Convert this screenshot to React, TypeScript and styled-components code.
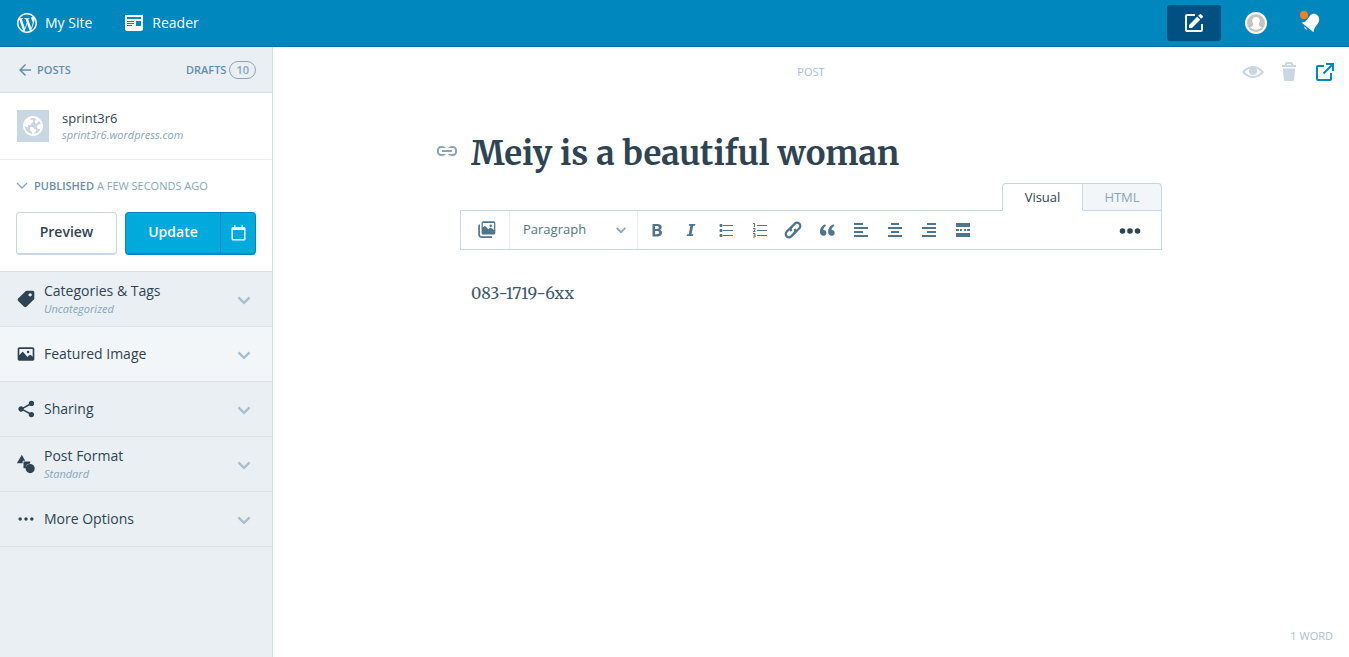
import React from 'react';
import styled, { createGlobalStyle } from 'styled-components';

const sans = `"Open Sans", "Noto Sans", sans-serif`;
const serif = `Merriweather, "DejaVu Serif Condensed", "DejaVu Serif", serif`;

const Global = createGlobalStyle`
  *, *::before, *::after { box-sizing: border-box; }
  body { margin: 0; background: #fff; color: #2e4453; font-family: ${sans}; font-size: 14px; line-height: 20px; }
  button, input, textarea, select { font: inherit; color: inherit; margin: 0; padding: 0; border: 0; background: none; }
  button { cursor: pointer; }
  a { color: inherit; text-decoration: none; }
  svg { display: block; fill: currentColor; flex: none; }
`;

const Page = styled.div`
  min-height: 100vh;
  display: flex;
  flex-direction: column;
`;

const Masterbar = styled.header`
  display: flex;
  align-items: center;
  justify-content: space-between;
  height: 47px;
  padding: 0 12px 0 15px;
  background: #0087be;
  border-bottom: 1px solid #006e9e;
  color: #fff;
`;

const NavGroup = styled.nav`
  display: flex;
  align-items: center;
  gap: 30px;
`;

const NavLink = styled.a`
  display: flex;
  align-items: center;
  gap: 6px;
  font-size: 14px;
`;

const Actions = styled.div`
  display: flex;
  align-items: center;
`;

const ComposeButton = styled.button`
  display: flex;
  align-items: center;
  justify-content: center;
  width: 54px;
  height: 36px;
  margin-right: 8px;
  border-radius: 3px;
  background: #005082;
`;

const BarButton = styled.button`
  display: flex;
  align-items: center;
  justify-content: center;
  width: 54px;
  height: 46px;
`;

const Body = styled.div`
  display: flex;
  flex: 1;
`;

const Sidebar = styled.aside`
  display: flex;
  flex-direction: column;
  flex: none;
  width: 273px;
  background: #e9eff3;
  border-right: 1px solid #d5e1e9;
`;

const SideHeader = styled.div`
  display: flex;
  align-items: center;
  justify-content: space-between;
  height: 46px;
  padding: 0 16px;
  border-bottom: 1px solid #d5e1e9;
  color: #668eaa;
  font-size: 11px;
  font-weight: 600;
  text-transform: uppercase;
`;

const SideLink = styled.a`
  display: flex;
  align-items: center;
  gap: 3px;
`;

const Count = styled.span`
  padding: 0 6px;
  border: 1px solid #87a6bc;
  border-radius: 12px;
  color: #87a6bc;
  line-height: 16px;
`;

const SiteCard = styled.div`
  display: flex;
  align-items: center;
  gap: 13px;
  height: 67px;
  padding: 0 17px;
  background: #fff;
  border-bottom: 1px solid #e9eff3;
`;

const SiteIcon = styled.span`
  display: flex;
  align-items: center;
  justify-content: center;
  width: 32px;
  height: 32px;
  background: #c8d7e1;
  color: #fff;
`;

const SiteName = styled.div`
  font-size: 13px;
  line-height: 18px;
`;

const SiteUrl = styled.div`
  color: #87a6bc;
  font-size: 11px;
  font-style: italic;
  line-height: 16px;
`;

const Publish = styled.section`
  padding: 16px;
  background: #fff;
  border-bottom: 1px solid #d5e1e9;
`;

const Status = styled.button`
  display: flex;
  align-items: center;
  gap: 6px;
  color: #87a6bc;
  font-size: 11px;
  text-transform: uppercase;
  b { color: #668eaa; font-weight: 600; }
`;

const PublishButtons = styled.div`
  display: flex;
  gap: 8px;
  margin-top: 16px;
`;

const Preview = styled.button`
  width: 101px;
  height: 43px;
  padding-bottom: 2px;
  border: 1px solid #c8d7e1;
  border-bottom-width: 2px;
  border-radius: 4px;
  font-weight: 600;
`;

const SplitButton = styled.div`
  display: flex;
  flex: 1;
  height: 43px;
  border: 1px solid #0087be;
  border-bottom-width: 2px;
  border-radius: 4px;
  background: #00aadc;
  color: #fff;
`;

const Update = styled.button`
  flex: 1;
  padding-bottom: 2px;
  font-weight: 600;
`;

const Schedule = styled.button`
  display: flex;
  align-items: center;
  justify-content: center;
  width: 35px;
  border-left: 1px solid #0087be;
`;

const Accordion = styled.button<{ $lit?: boolean }>`
  display: flex;
  align-items: center;
  gap: 8px;
  height: 55px;
  padding: 0 19px 0 16px;
  border-bottom: 1px solid #d9e3ea;
  background: ${p => (p.$lit ? '#f3f6f8' : 'transparent')};
  text-align: left;
`;

const AccordionText = styled.span`
  display: flex;
  flex: 1;
  flex-direction: column;
`;

const AccordionTitle = styled.span`
  line-height: 20px;
`;

const AccordionNote = styled.span`
  color: #87a6bc;
  font-size: 11px;
  font-style: italic;
  line-height: 16px;
`;

const Chevron = styled.span`
  padding-top: 2px;
  color: #a8bece;
`;

const Main = styled.main`
  display: flex;
  flex: 1;
  flex-direction: column;
  min-width: 0;
`;

const GroundControl = styled.div`
  display: grid;
  grid-template-columns: 1fr auto 1fr;
  align-items: center;
  height: 50px;
  padding: 0 12px;
`;

const PostType = styled.span`
  grid-column: 2;
  color: #a8bece;
  font-size: 11px;
`;

const Tools = styled.div`
  display: flex;
  justify-content: flex-end;
  gap: 12px;
`;

const ToolButton = styled.button<{ $active?: boolean }>`
  color: ${p => (p.$active ? '#0087be' : '#c8d7e1')};
`;

const Editor = styled.div`
  flex: 1;
  width: 100%;
  max-width: 750px;
  margin: 0 auto;
  padding: 32px 24px 0;
`;

const TitleRow = styled.div`
  display: flex;
  align-items: center;
  gap: 12px;
  margin-left: -25px;
  color: #87a6bc;
`;

const PermalinkButton = styled.button`
  padding-bottom: 4px;
`;

const TitleInput = styled.input`
  flex: 1;
  min-width: 0;
  height: 48px;
  color: #2e4453;
  font-family: ${serif};
  font-size: 33px;
  font-weight: 700;
  outline: 0;
`;

const Tabs = styled.div`
  display: flex;
  justify-content: flex-end;
  margin-top: 6px;
`;

const Tab = styled.button<{ $active?: boolean }>`
  width: ${p => (p.$active ? '81px' : '79px')};
  height: 28px;
  margin-bottom: -1px;
  border: 1px solid #c8d7e1;
  border-left-width: ${p => (p.$active ? '1px' : '0')};
  border-bottom-color: ${p => (p.$active ? '#fff' : '#c8d7e1')};
  border-radius: ${p => (p.$active ? '4px 0 0 0' : '0 4px 0 0')};
  background: ${p => (p.$active ? '#fff' : '#f3f6f8')};
  color: ${p => (p.$active ? '#2e4453' : '#87a6bc')};
  font-size: 13px;
  z-index: 1;
`;

const Toolbar = styled.div`
  display: flex;
  align-items: stretch;
  height: 40px;
  border: 1px solid #c8d7e1;
  color: #4f748e;
`;

const MediaButton = styled.button`
  display: flex;
  align-items: center;
  justify-content: center;
  width: 49px;
  padding-left: 4px;
  border-right: 1px solid #e9eff3;
`;

const FormatSelect = styled.div`
  display: flex;
  align-items: center;
  width: 128px;
  padding: 0 9px 0 13px;
  border-right: 1px solid #e9eff3;
  select { flex: 1; min-width: 0; padding-bottom: 2px; appearance: none; font-size: 13px; }
  svg { color: #87a6bc; }
`;

const FormatButtons = styled.div`
  display: flex;
  flex: 1;
  padding-left: 2px;
`;

const FormatButton = styled.button`
  display: flex;
  align-items: center;
  justify-content: center;
  width: 34px;
`;

const MoreButton = styled(FormatButton)`
  margin-right: 14px;
  padding-top: 2px;
  color: #2e4453;
`;

const Content = styled.textarea`
  display: block;
  width: 100%;
  height: 160px;
  padding: 28px 11px;
  color: #3d596d;
  font-family: ${serif};
  font-size: 16px;
  line-height: 30px;
  resize: none;
  outline: 0;
`;

const Footer = styled.footer`
  padding: 0 16px 11px;
  color: #a8bece;
  font-size: 11px;
  text-align: right;
`;

/* Icons on a 24-unit grid. */
const paths = {
  wordpress: 'M12 2C6.477 2 2 6.477 2 12s4.477 10 10 10 10-4.477 10-10S17.523 2 12 2zM3.5 12c0-1.232.264-2.402.736-3.459L8.291 19.65C5.456 18.272 3.5 15.365 3.5 12zm8.5 8.5c-.834 0-1.64-.12-2.401-.345l2.551-7.411 2.613 7.158c.017.042.038.08.061.116-.884.31-1.833.482-2.824.482zm1.172-12.486c.512-.027.973-.081.973-.081.458-.054.404-.727-.054-.701 0 0-1.377.108-2.265.108-.835 0-2.239-.108-2.239-.108-.458-.026-.511.674-.053.701 0 0 .434.054.892.081l1.324 3.629-1.86 5.579-3.096-9.208c.512-.027.973-.081.973-.081.458-.054.403-.727-.055-.701 0 0-1.376.108-2.265.108-.159 0-.347-.004-.547-.01C6.418 5.025 9.03 3.5 12 3.5c2.213 0 4.228.846 5.74 2.232-.037-.002-.072-.007-.11-.007-.835 0-1.427.727-1.427 1.509 0 .701.404 1.293.835 1.994.323.566.701 1.293.701 2.344 0 .727-.28 1.572-.647 2.748l-.848 2.833-3.072-9.138zm3.101 11.332l2.596-7.506c.485-1.213.646-2.182.646-3.045 0-.313-.021-.603-.057-.874.664 1.21 1.042 2.599 1.042 4.078 0 3.136-1.7 5.874-4.227 7.347z',
  reader: 'M3 4v14c0 1.1.9 2 2 2h14c1.1 0 2-.9 2-2V4H3zm7 11H5v-1h5v1zm2-2H5v-1h7v1zm0-2H5v-1h7v1zm7 4h-5v-5h5v5zm0-7H5V6h14v2z',
  arrowLeft: 'M20 11H7.83l5.59-5.59L12 4l-8 8 8 8 1.41-1.41L7.83 13H20v-2z',
  globe: 'M12 2C6.477 2 2 6.477 2 12s4.477 10 10 10 10-4.477 10-10S17.523 2 12 2zm0 18l2-2 1-1v-2h-2v-1l-1-1H9v3l2 2v1.93c-3.94-.494-7-3.858-7-7.93l1 1h2v-2h2l3-3V6h-2L9 5v-.41C9.927 4.21 10.94 4 12 4s2.073.212 3 .59V6l-1 1v2l1 1 3.13-3.13c.752.897 1.304 1.964 1.606 3.13H18l-2 2v2l1 1h2l.286.286C18.03 18.06 15.24 20 12 20z',
  chevron: 'M20.500 9.500L12 18 3.500 9.500 5.700 7.300 12 13.600l6.300-6.300z',
  tag: 'M20 2.007h-7.087c-.53 0-1.04.21-1.414.586L2.592 11.5c-.78.78-.78 2.046 0 2.827l7.086 7.086c.78.78 2.046.78 2.827 0l8.906-8.906c.376-.374.587-.883.587-1.413V4.007c0-1.105-.895-2-2-2zM17.007 9c-1.105 0-2-.895-2-2s.895-2 2-2 2 .895 2 2-.895 2-2 2z',
  image: 'M13 9.5c0-.828.672-1.5 1.5-1.5s1.5.672 1.5 1.5-.672 1.5-1.5 1.5-1.5-.672-1.5-1.5zM22 6v12c0 1.105-.895 2-2 2H4c-1.105 0-2-.895-2-2V6c0-1.105.895-2 2-2h16c1.105 0 2 .895 2 2zm-2 0H4v7.444L8 9l5.895 6.55 1.587-1.85c.798-.932 2.24-.932 3.037 0L20 15.426V6z',
  share: 'M18.500 15.500c-.9 0-1.600.3-2.200.8L9.400 12.700c.1-.5.1-.9 0-1.400l6.900-3.600c.6.5 1.300.8 2.200.8a3.200 3.200 0 1 0-3.200-3.200l.1.800-6.900 3.700a3.200 3.200 0 1 0 0 4.400l6.900 3.700-.1.800a3.200 3.200 0 1 0 3.200-3.200z',
  shapes: 'M7 1l4 7H8v3H1zM9 9h8v2.500A6 6 0 0 0 11.500 17H9zM17 12a5.500 5.500 0 1 1 0 11 5.500 5.500 0 0 1 0-11z',
  ellipsis: 'M7 12c0 1.104-.896 2-2 2s-2-.896-2-2 .896-2 2-2 2 .896 2 2zm12-2c-1.104 0-2 .896-2 2s.896 2 2 2 2-.896 2-2-.896-2-2-2zm-7 0c-1.104 0-2 .896-2 2s.896 2 2 2 2-.896 2-2-.896-2-2-2z',
  ellipsisBold: 'M4.500 9.200a2.800 2.800 0 1 1 0 5.600 2.800 2.800 0 0 1 0-5.600zM12 9.200a2.800 2.800 0 1 1 0 5.600 2.800 2.800 0 0 1 0-5.600zM19.500 9.200a2.800 2.800 0 1 1 0 5.600 2.800 2.800 0 0 1 0-5.600z',
  create: 'M19 13v6H5V5h8V3H5a2 2 0 0 0-2 2v14a2 2 0 0 0 2 2h14a2 2 0 0 0 2-2v-6zM7 17v-3l8.200-8.200 3 3L10 17zM16.200 4.800l1.400-1.400a1.200 1.200 0 0 1 1.700 0l1.300 1.300a1.200 1.200 0 0 1 0 1.700l-1.400 1.400z',
  eye: 'M12 6C5.188 6 1 12 1 12s4.188 6 11 6 11-6 11-6-4.188-6-11-6zm0 10c-3.943 0-6.926-2.484-8.379-4 1.040-1.085 2.862-2.657 5.254-3.469A3.960 3.960 0 0 0 8 11a4 4 0 0 0 8 0c0-.934-.329-1.784-.875-2.469 2.393.812 4.215 2.385 5.254 3.469-1.455 1.518-4.437 4-8.379 4z',
  trash: 'M6 8.500h12l-.8 11A1.800 1.800 0 0 1 15.400 21H8.600a1.800 1.800 0 0 1-1.800-1.500zM19 5v2H5V5h3V4a2 2 0 0 1 2-2h4a2 2 0 0 1 2 2v1h3zm-9 0h4V4h-4v1z',
  external: 'M19 13v6a2 2 0 0 1-2 2H5a2 2 0 0 1-2-2V7a2 2 0 0 1 2-2h6v2H5v12h12v-6h2zM13 3v2h4.586l-7.793 7.793 1.414 1.414L19 6.414V11h2V3h-8z',
  permalink: 'M17 13H7v-2h10v2zm1-6h-1c-1.631 0-3.065.792-3.977 2H18c1.103 0 2 .897 2 2v2c0 1.103-.897 2-2 2h-4.977c.913 1.208 2.347 2 3.977 2h1c2.209 0 4-1.791 4-4v-2c0-2.209-1.791-4-4-4zM2 11v2c0 2.209 1.791 4 4 4h1c1.630 0 3.065-.792 3.977-2H6c-1.103 0-2-.897-2-2v-2c0-1.103.897-2 2-2h4.977C10.065 7.792 8.631 7 7 7H6c-2.209 0-4 1.791-4 4z',
  images: 'M16.500 8.500a1.500 1.500 0 1 0 0-3 1.500 1.500 0 0 0 0 3zM22 3.500v12a2 2 0 0 1-2 2H7.500a2 2 0 0 1-2-2v-12a2 2 0 0 1 2-2H20a2 2 0 0 1 2 2zm-1.500 0H7v5.500l2.500-2 4 4 1.500-1.200c.8-.7 1.700-.7 2.500 0l3 2.200zM3.500 5v12.500a2 2 0 0 0 2 2H18v2H5.500a4 4 0 0 1-4-4V7a2 2 0 0 1 2-2z',
  bold: 'M6 4h5.500c2.300 0 4 .3 5.100 1 1.100.7 1.600 1.700 1.600 3.200 0 1-.2 1.800-.7 2.400-.5.6-1.100 1-1.900 1.100v.1c1.100.3 1.800.7 2.300 1.400.5.600.7 1.500.7 2.500 0 1.500-.5 2.700-1.600 3.500-1.100.8-2.600 1.300-4.400 1.300H6V4zm3.500 6.500h2.200c.9 0 1.600-.1 2-.4.400-.3.700-.8.700-1.500 0-.6-.2-1.100-.7-1.400-.500-.3-1.200-.4-2.200-.4h-2zm0 2.700v4.500H12c1 0 1.700-.2 2.100-.6.5-.4.7-.9.7-1.700 0-1.400-1-2.200-2.900-2.200z',
  italic: 'M9.500 4L9 6.400h2.200L9 17.600H6.700l-.5 2.400h8.300l.5-2.400h-2.300l2.300-11.200h2.300l.5-2.400z',
  quote: 'M11.200 15.800a3.800 3.800 0 0 1-3.900 3.900C4.200 19.700 2.500 17.300 2.500 14c0-4.200 2.500-7.600 7-9.700l1.300 2.400c-2.500 1.300-3.700 3-3.700 5.300 2.500-.2 4.100 1.500 4.100 3.800zM22.200 15.800a3.800 3.800 0 0 1-3.900 3.900c-3.100 0-4.800-2.400-4.800-5.700 0-4.200 2.500-7.600 7-9.700l1.300 2.400c-2.500 1.300-3.700 3-3.700 5.300 2.500-.2 4.100 1.500 4.100 3.800z',
};

/* Ruled icons on a 20-unit grid, drawn on whole pixels. */
const rules = {
  bullets: 'M8 5h10v1H8zM8 10h10v1H8zM8 15h10v1H8zM5 4h2v3H5zM4.500 4.500h3v2h-3zM5 9h2v3H5zM4.500 9.500h3v2h-3zM5 14h2v3H5zM4.500 14.500h3v2h-3z',
  left: 'M3 3h9v2H3zM3 7h14v2H3zM3 11h9v2H3zM3 15h14v2H3z',
  center: 'M6 3h8v2H6zM3 7h14v2H3zM6 11h8v2H6zM3 15h14v2H3z',
  right: 'M8 3h9v2H8zM3 7h14v2H3zM8 11h9v2H8zM3 15h14v2H3z',
  more: 'M3 3h14v4H3zM3 13h14v4H3zM3 9h3v2H3zM7 9h2v2H7zM11 9h2v2h-2zM14 9h3v2h-3z',
};

const Icon = ({ name, size = 18 }: { name: keyof typeof paths; size?: number }) => (
  <svg width={size} height={size} viewBox="0 0 24 24" aria-hidden="true">
    <path fillRule="evenodd" d={paths[name]} />
  </svg>
);

const RuleIcon = ({ name }: { name: keyof typeof rules }) => (
  <svg width="20" height="20" viewBox="0 0 20 20" aria-hidden="true">
    <path d={rules[name]} />
  </svg>
);

const NumberedIcon = () => (
  <svg width="20" height="20" viewBox="0 0 20 20" aria-hidden="true">
    <path d="M8 5h10v1H8zM8 10h10v1H8zM8 15h10v1H8z" />
    <path d="M4 3.500h1.500V7M4 8.500h2v1.500L4.300 11.500H6.500M4 13.500h2v3.500H4M4.500 15.200H6" fill="none" stroke="currentColor" />
  </svg>
);

const LinkIcon = () => (
  <svg width="20" height="20" viewBox="0 0 20 20" aria-hidden="true">
    <g transform="rotate(-45 10 10)" fill="none" stroke="currentColor" strokeWidth="2.200" strokeLinecap="round">
      <path d="M11 6.800H4.200a3.200 3.200 0 0 0 0 6.400h4.600a3.200 3.200 0 0 0 2.900-2" />
      <path d="M9 13.200h6.800a3.200 3.200 0 0 0 0-6.400h-4.600a3.200 3.200 0 0 0-2.900 2" />
    </g>
  </svg>
);

const CalendarIcon = () => (
  <svg width="16" height="16" viewBox="0 0 16 16" aria-hidden="true">
    <path fillRule="evenodd" d="M4 0h1.500v2h6V0H13v2h1a1.500 1.500 0 0 1 1.500 1.500V14a1.500 1.500 0 0 1-1.500 1.500H3A1.500 1.500 0 0 1 1.500 14V3.500A1.500 1.500 0 0 1 3 2h1zM3 5v9h11V5z" />
  </svg>
);

const StatusChevron = () => (
  <svg width="12" height="12" viewBox="0 0 12 12" aria-hidden="true">
    <path d="M1 3l5 5 5-5" fill="none" stroke="currentColor" strokeWidth="1.300" />
  </svg>
);

const Avatar = () => (
  <svg width="22" height="22" viewBox="0 0 22 22" aria-hidden="true">
    <circle cx="11" cy="11" r="11" fill="#fff" />
    <circle cx="11" cy="11" r="9" fill="#c4c4c4" />
    <path d="M11 5a4 4 0 0 1 3 6.500c-.5 1-.5 2 .5 2.500l2 1.500a8 8 0 0 1-11 0l2-1.500c1-.5 1-1.500.5-2.500A4 4 0 0 1 11 5z" fill="#fff" />
  </svg>
);

const Bell = () => (
  <svg width="24" height="24" viewBox="0 0 24 24" aria-hidden="true">
    <path d="M3.500 11.500c3 .2 5-1.500 6.500-4L12 4.800C15.500.8 21.200 3.500 21.200 8.500c0 5-5.200 6.500-5.700 12.800zM6.500 15.500l2.800 2.700c-1.300 1.100-3.600-.9-2.800-2.700z" />
    <circle cx="6" cy="4" r="4" fill="#f0821e" />
  </svg>
);

const sections: { icon: keyof typeof paths; title: string; note?: string; lit?: boolean }[] = [
  { icon: 'tag', title: 'Categories & Tags', note: 'Uncategorized' },
  { icon: 'image', title: 'Featured Image', lit: true },
  { icon: 'share', title: 'Sharing' },
  { icon: 'shapes', title: 'Post Format', note: 'Standard' },
  { icon: 'ellipsis', title: 'More Options' },
];

const formats: { label: string; icon: React.ReactNode }[] = [
  { label: 'Bold', icon: <Icon name="bold" /> },
  { label: 'Italic', icon: <Icon name="italic" /> },
  { label: 'Bulleted list', icon: <RuleIcon name="bullets" /> },
  { label: 'Numbered list', icon: <NumberedIcon /> },
  { label: 'Insert link', icon: <LinkIcon /> },
  { label: 'Blockquote', icon: <Icon name="quote" /> },
  { label: 'Align left', icon: <RuleIcon name="left" /> },
  { label: 'Align center', icon: <RuleIcon name="center" /> },
  { label: 'Align right', icon: <RuleIcon name="right" /> },
  { label: 'Read more', icon: <RuleIcon name="more" /> },
];

export default function App() {
  return (
    <Page>
      <Global />
      <Masterbar>
        <NavGroup>
          <NavLink href="#site"><Icon name="wordpress" size={24} />My Site</NavLink>
          <NavLink href="#reader"><Icon name="reader" size={24} />Reader</NavLink>
        </NavGroup>
        <Actions>
          <ComposeButton aria-label="Write"><Icon name="create" size={24} /></ComposeButton>
          <BarButton aria-label="Profile"><Avatar /></BarButton>
          <BarButton aria-label="Notifications"><Bell /></BarButton>
        </Actions>
      </Masterbar>
      <Body>
        <Sidebar>
          <SideHeader>
            <SideLink href="#posts"><Icon name="arrowLeft" size={18} />Posts</SideLink>
            <SideLink href="#drafts">Drafts<Count>10</Count></SideLink>
          </SideHeader>
          <SiteCard>
            <SiteIcon><Icon name="globe" size={24} /></SiteIcon>
            <div>
              <SiteName>sprint3r6</SiteName>
              <SiteUrl>sprint3r6.wordpress.com</SiteUrl>
            </div>
          </SiteCard>
          <Publish>
            <Status>
              <StatusChevron />
              <span><b>Published</b> a few seconds ago</span>
            </Status>
            <PublishButtons>
              <Preview>Preview</Preview>
              <SplitButton>
                <Update>Update</Update>
                <Schedule aria-label="Schedule"><CalendarIcon /></Schedule>
              </SplitButton>
            </PublishButtons>
          </Publish>
          {sections.map(s => (
            <Accordion key={s.title} $lit={s.lit}>
              <Icon name={s.icon} size={20} />
              <AccordionText>
                <AccordionTitle>{s.title}</AccordionTitle>
                {s.note && <AccordionNote>{s.note}</AccordionNote>}
              </AccordionText>
              <Chevron><Icon name="chevron" size={18} /></Chevron>
            </Accordion>
          ))}
        </Sidebar>
        <Main>
          <GroundControl>
            <PostType>POST</PostType>
            <Tools>
              <ToolButton aria-label="Visibility"><Icon name="eye" size={24} /></ToolButton>
              <ToolButton aria-label="Trash"><Icon name="trash" size={24} /></ToolButton>
              <ToolButton aria-label="View post" $active><Icon name="external" size={24} /></ToolButton>
            </Tools>
          </GroundControl>
          <Editor>
            <TitleRow>
              <PermalinkButton aria-label="Permalink"><Icon name="permalink" size={24} /></PermalinkButton>
              <TitleInput aria-label="Title" defaultValue="Meiy is a beautiful woman" />
            </TitleRow>
            <Tabs>
              <Tab $active>Visual</Tab>
              <Tab>HTML</Tab>
            </Tabs>
            <Toolbar>
              <MediaButton aria-label="Add media"><Icon name="images" size={20} /></MediaButton>
              <FormatSelect>
                <select aria-label="Text style" defaultValue="p"><option value="p">Paragraph</option></select>
                <Icon name="chevron" size={14} />
              </FormatSelect>
              <FormatButtons>
                {formats.map(f => (
                  <FormatButton key={f.label} aria-label={f.label}>{f.icon}</FormatButton>
                ))}
              </FormatButtons>
              <MoreButton aria-label="Toggle advanced"><Icon name="ellipsisBold" size={24} /></MoreButton>
            </Toolbar>
            <Content aria-label="Post content" defaultValue="083-1719-6xx" />
          </Editor>
          <Footer>1 WORD</Footer>
        </Main>
      </Body>
    </Page>
  );
}
